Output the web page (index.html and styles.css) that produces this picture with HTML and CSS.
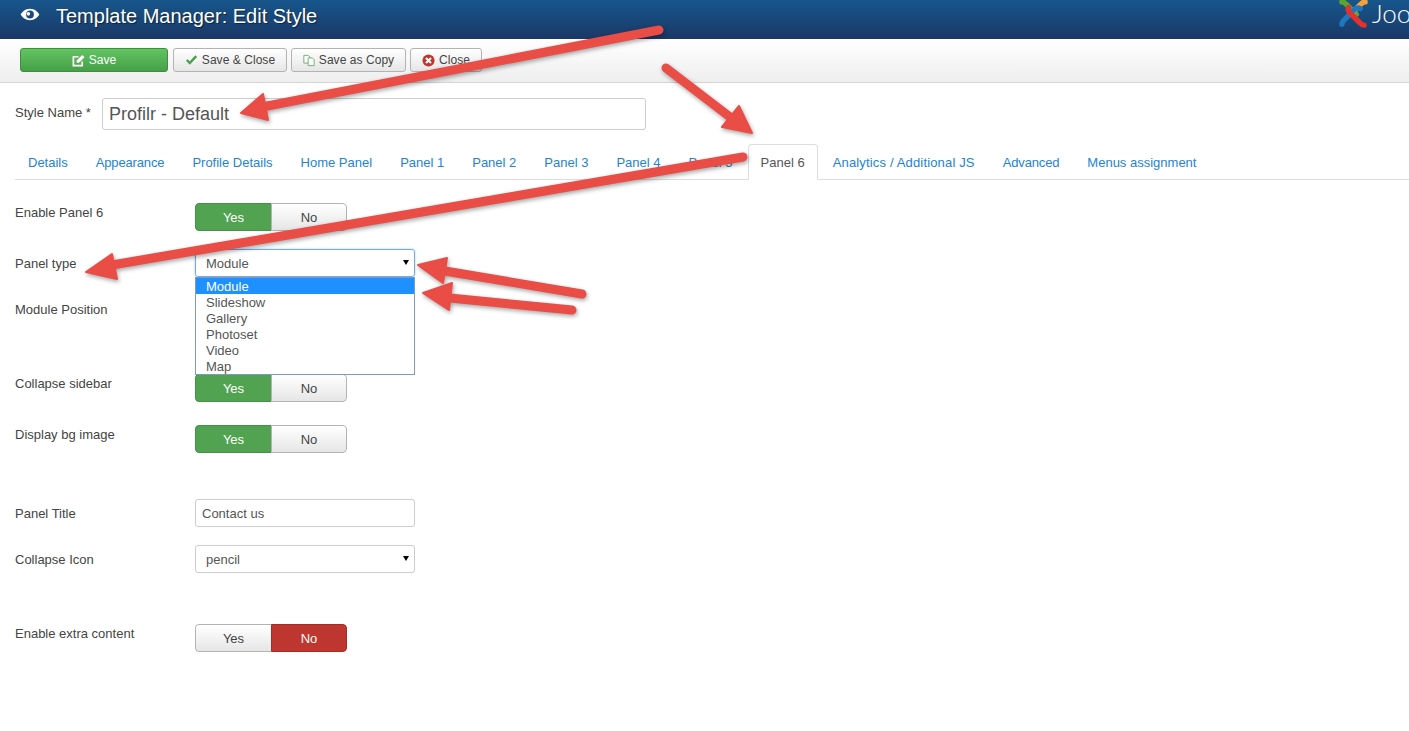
FILE: index.html
```html
<!DOCTYPE html>
<html lang="en">
<head>
    <meta charset="UTF-8">
    <meta name="viewport" content="width=device-width, initial-scale=1.0">
    <title>Template Manager: Edit Style</title>
    <link rel="stylesheet" href="styles.css">
</head>
<body>
    <header class="header">
        <svg class="header-icon" viewBox="0 0 24 16" width="20" height="13">
            <path fill="#fff" fill-rule="evenodd" d="M12 1C6.500 1 2.400 4.600.5 8c1.900 3.400 6 7 11.500 7s9.600-3.600 11.500-7C21.600 4.600 17.500 1 12 1zm0 2.200a4.800 4.800 0 1 1 0 9.600 4.800 4.800 0 0 1 0-9.600zM10 5a2.200 2.200 0 1 0 0 4.400A2.200 2.200 0 0 0 10 5z"/>
        </svg>
        <h1 class="header-title">Template Manager: Edit Style</h1>
        <div class="brand">
            <svg class="brand-logo" viewBox="0 0 32 32" width="31" height="31">
                <g fill="none" stroke-width="5.500" stroke-linecap="round">
                    <path stroke="#5ba52c" d="M4 4c3 0 4 2 6 4l9 9"/>
                    <path stroke="#f6a23c" d="M28 4c-3 0-4 2-6 4l-9 9"/>
                    <path stroke="#1f78bf" d="M4 27c0-3 2-4 4-6l9-9c2-2 4-2 6-1"/>
                    <path stroke="#e3322e" d="M27 28c-3 0-4-2-6-4l-9-9c-2-2-2-4-1-5"/>
                </g>
            </svg>
            <span class="brand-name">Joo</span>
        </div>
    </header>

    <div class="toolbar">
        <button class="btn btn-save">
            <svg class="btn-icon" viewBox="0 0 14 14" width="13" height="13"><path fill="none" stroke="#fff" stroke-width="1.800" d="M11 8v4.500H1.500V3H7"/><path fill="#fff" d="M5 7l6-6 2.500 2.500-6 6H5z"/></svg>
            Save
        </button>
        <button class="btn btn-save-close">
            <svg class="btn-icon" viewBox="0 0 14 14" width="13" height="12"><path fill="none" stroke="#4d9c4f" stroke-width="2.800" d="M1.500 7l3.500 3.500 7.500-8"/></svg>
            Save &amp; Close
        </button>
        <button class="btn btn-copy">
            <svg class="btn-icon" viewBox="0 0 14 14" width="12" height="13"><path fill="#fff" stroke="#5ea75f" d="M1 1h5l2 2v7H1z"/><path fill="#fff" stroke="#5ea75f" d="M6 4h5l2 2v7H6z"/></svg>
            Save as Copy
        </button>
        <button class="btn btn-close">
            <svg class="btn-icon" viewBox="0 0 14 14" width="13" height="13"><circle cx="7" cy="7" r="6.500" fill="#bd362f"/><path stroke="#fff" stroke-width="2.200" d="M4.300 4.300l5.400 5.400M9.700 4.300l-5.400 5.400"/></svg>
            Close
        </button>
    </div>

    <main class="content">
        <div class="style-name">
            <label class="style-label">Style Name *</label>
            <div class="style-input">Profilr - Default</div>
        </div>

        <ul class="tabs">
            <li class="tab">Details</li>
            <li class="tab tab-tight">Appearance</li>
            <li class="tab">Profile Details</li>
            <li class="tab">Home Panel</li>
            <li class="tab">Panel 1</li>
            <li class="tab">Panel 2</li>
            <li class="tab">Panel 3</li>
            <li class="tab">Panel 4</li>
            <li class="tab">Panel 5</li>
            <li class="tab active">Panel 6</li>
            <li class="tab tab-wide">Analytics / Additional JS</li>
            <li class="tab tab-tight">Advanced</li>
            <li class="tab">Menus assignment</li>
        </ul>

        <div class="form">
            <div class="row row-toggle">
                <label class="row-label">Enable Panel 6</label>
                <div class="toggle"><span class="toggle-opt yes">Yes</span><span class="toggle-opt">No</span></div>
            </div>
            <div class="row">
                <label class="row-label">Panel type</label>
                <div class="select-wrap">
                    <div class="select focused">Module</div>
                    <ul class="dropdown">
                        <li class="dropdown-item selected">Module</li>
                        <li class="dropdown-item">Slideshow</li>
                        <li class="dropdown-item">Gallery</li>
                        <li class="dropdown-item">Photoset</li>
                        <li class="dropdown-item">Video</li>
                        <li class="dropdown-item">Map</li>
                    </ul>
                </div>
            </div>
            <div class="row row-position">
                <label class="row-label">Module Position</label>
            </div>
            <div class="row row-toggle">
                <label class="row-label">Collapse sidebar</label>
                <div class="toggle"><span class="toggle-opt yes">Yes</span><span class="toggle-opt">No</span></div>
            </div>
            <div class="row row-toggle">
                <label class="row-label">Display bg image</label>
                <div class="toggle"><span class="toggle-opt yes">Yes</span><span class="toggle-opt">No</span></div>
            </div>
            <div class="spacer"></div>
            <div class="row">
                <label class="row-label">Panel Title</label>
                <div class="text-input">Contact us</div>
            </div>
            <div class="row">
                <label class="row-label">Collapse Icon</label>
                <div class="select">pencil</div>
            </div>
            <div class="spacer"></div>
            <div class="row row-toggle">
                <label class="row-label">Enable extra content</label>
                <div class="toggle"><span class="toggle-opt">Yes</span><span class="toggle-opt no">No</span></div>
            </div>
        </div>
    </main>

    <!-- annotation arrows drawn over the screenshot -->
    <svg class="arrows" viewBox="0 0 1409 731" width="1409" height="731">
        <g fill="#ea4c46" stroke="#ea4c46" stroke-linecap="round" stroke-linejoin="round">
            <path fill="none" stroke-width="9" d="M659 30L262 107"/>
            <path stroke-width="2" d="M241 113L263 94L268 120z"/>
            <path fill="none" stroke-width="9" d="M666 68L730 117"/>
            <path stroke-width="2" d="M752 133L739 106L722 127z"/>
            <path fill="none" stroke-width="9" d="M743 157L112 265"/>
            <path stroke-width="2" d="M86 272L112 254L117 279z"/>
            <path fill="none" stroke-width="9" d="M582 294L445 271"/>
            <path stroke-width="2" d="M418 265L447 258L443 283z"/>
            <path fill="none" stroke-width="9" d="M572 310L450 298"/>
            <path stroke-width="2" d="M423 293L452 283L449 310z"/>
        </g>
    </svg>
</body>
</html>
```
FILE: styles.css
```css
body {
    margin: 0;
    font-family: "Liberation Sans", Arial, sans-serif;
    font-size: 13px;
    color: #444;
    background: #fff;
    position: relative;
    height: 731px;
    overflow: hidden;
}
.header {
    display: flex;
    align-items: flex-start;
    height: 39px;
    padding-left: 20px;
    background: linear-gradient(#17568c, #1a3867);
    overflow: hidden;
}
.header-icon {
    flex: none;
    margin-top: 8px;
}
.header-title {
    margin: 4px 0 0 16px;
    font-size: 20px;
    line-height: 24px;
    font-weight: normal;
    color: #fff;
    text-shadow: 1px 1px 1px rgba(0,0,0,0.5);
}
.brand {
    display: flex;
    align-items: flex-start;
    flex: none;
    width: 71px;
    margin-left: auto;
    overflow: hidden;
}
.brand-logo {
    flex: none;
    margin-top: -2px;
}
.brand-name {
    margin: -3px 0 0 3px;
    font-family: Lato, sans-serif;
    font-size: 26px;
    font-weight: 300;
    color: #fff;
}
.toolbar {
    display: flex;
    gap: 4px;
    padding: 9px 0 0 20px;
    box-sizing: border-box;
    height: 44px;
    background: linear-gradient(#fff, #eee);
    border-bottom: 1px solid #d4d4d4;
}
.btn {
    height: 24px;
    padding: 0;
    display: flex;
    align-items: center;
    justify-content: center;
    gap: 4px;
    font-family: inherit;
    font-size: 12px;
    letter-spacing: 0.05px;
    white-space: nowrap;
    color: #444;
    background: linear-gradient(#fff, #e6e6e6);
    border: 1px solid #b3b3b3;
    border-radius: 3px;
}
.btn-save {
    width: 148px;
    margin-right: 1px;
    color: #fff;
    background: linear-gradient(#62c462, #46a046);
    border-color: #3f8f3f;
}
.btn-save-close { width: 114px; }
.btn-copy { width: 115px; }
.btn-close { width: 72px; }
.btn-icon { flex: none; }
.style-name {
    display: flex;
    align-items: center;
    padding: 15px 0 0 15px;
}
.style-label {
    width: 87px;
    position: relative;
    top: -2px;
}
.style-input {
    width: 544px;
    height: 32px;
    line-height: 30px;
    padding-left: 6px;
    box-sizing: border-box;
    border: 1px solid #ccc;
    border-radius: 3px;
    font-size: 18px;
    color: #555;
}
.tabs {
    display: flex;
    gap: 2px;
    list-style: none;
    height: 36px;
    margin: 14px 0 0 15px;
    padding: 0;
    border-bottom: 1px solid #ddd;
    box-sizing: border-box;
}
.tab {
    height: 36px;
    line-height: 35px;
    padding: 0 12px;
    color: #2384d3;
    border: 1px solid transparent;
    box-sizing: border-box;
    border-radius: 4px 4px 0 0;
    white-space: nowrap;
}
.tab-tight { letter-spacing: -0.15px; }
.tab-wide { letter-spacing: 0.16px; }
.tab.active {
    color: #555;
    background: #fff;
    border-color: #ddd #ddd #fff;
}
.form {
    padding: 18px 0 0 15px;
}
.row {
    display: flex;
    align-items: flex-start;
    margin-bottom: 18px;
}
.row-label {
    flex: none;
    width: 180px;
    line-height: 18px;
    padding-top: 6px;
    margin-bottom: -1px;
}
.row-toggle .toggle {
    margin-top: 5px;
}
.row-position {
    height: 56px;
}
.spacer {
    height: 10px;
    margin-bottom: 18px;
}
.toggle {
    display: flex;
    width: 152px;
    height: 28px;
    box-sizing: border-box;
    border-radius: 4px;
    overflow: hidden;
}
.toggle-opt {
    flex: 1;
    box-sizing: border-box;
    line-height: 27px;
    text-align: center;
    color: #444;
    background: linear-gradient(#fff, #e6e6e6);
    border: 1px solid #b3b3b3;
}
.toggle-opt:first-child { border-radius: 4px 0 0 4px; border-right: 0; width: 76px; flex: none; }
.toggle-opt:last-child { border-radius: 0 4px 4px 0; }
.toggle-opt.yes {
    color: #fff;
    background: #51a351;
    border-color: #46914a;
}
.toggle-opt.no {
    color: #fff;
    background: #bd362f;
    border-color: #a02f29;
}
.select-wrap {
    position: relative;
    width: 220px;
}
.select {
    position: relative;
    width: 220px;
    height: 28px;
    line-height: 27px;
    padding-left: 10px;
    box-sizing: border-box;
    border: 1px solid #ccc;
    border-radius: 3px;
    color: #555;
}
/* little black triangle of the native select */
.select::after {
    content: "";
    position: absolute;
    right: 5px;
    top: 10px;
    border-style: solid;
    border-width: 5px 3px 0;
    border-color: #000 transparent transparent;
}
.select.focused {
    border-color: #7ba7e8;
    box-shadow: 0 0 2px rgba(82,168,236,0.6);
}
.dropdown {
    position: absolute;
    z-index: 1;
    top: 28px;
    left: 0;
    width: 220px;
    box-sizing: border-box;
    margin: 0;
    padding: 0;
    list-style: none;
    background: #fff;
    border: 1px solid #7a9cc0;
}
.dropdown-item {
    height: 16px;
    line-height: 17px;
    padding-left: 10px;
    color: #555;
}
.dropdown-item.selected {
    color: #fff;
    background: #1e90ff;
}
.text-input {
    width: 220px;
    height: 28px;
    line-height: 27px;
    padding-left: 6px;
    box-sizing: border-box;
    border: 1px solid #ccc;
    border-radius: 3px;
    color: #555;
}
.arrows {
    position: absolute;
    left: 0;
    top: 0;
    z-index: 2;
    pointer-events: none;
    filter: drop-shadow(1px 2px 2px rgba(0,0,0,0.35));
}
```
